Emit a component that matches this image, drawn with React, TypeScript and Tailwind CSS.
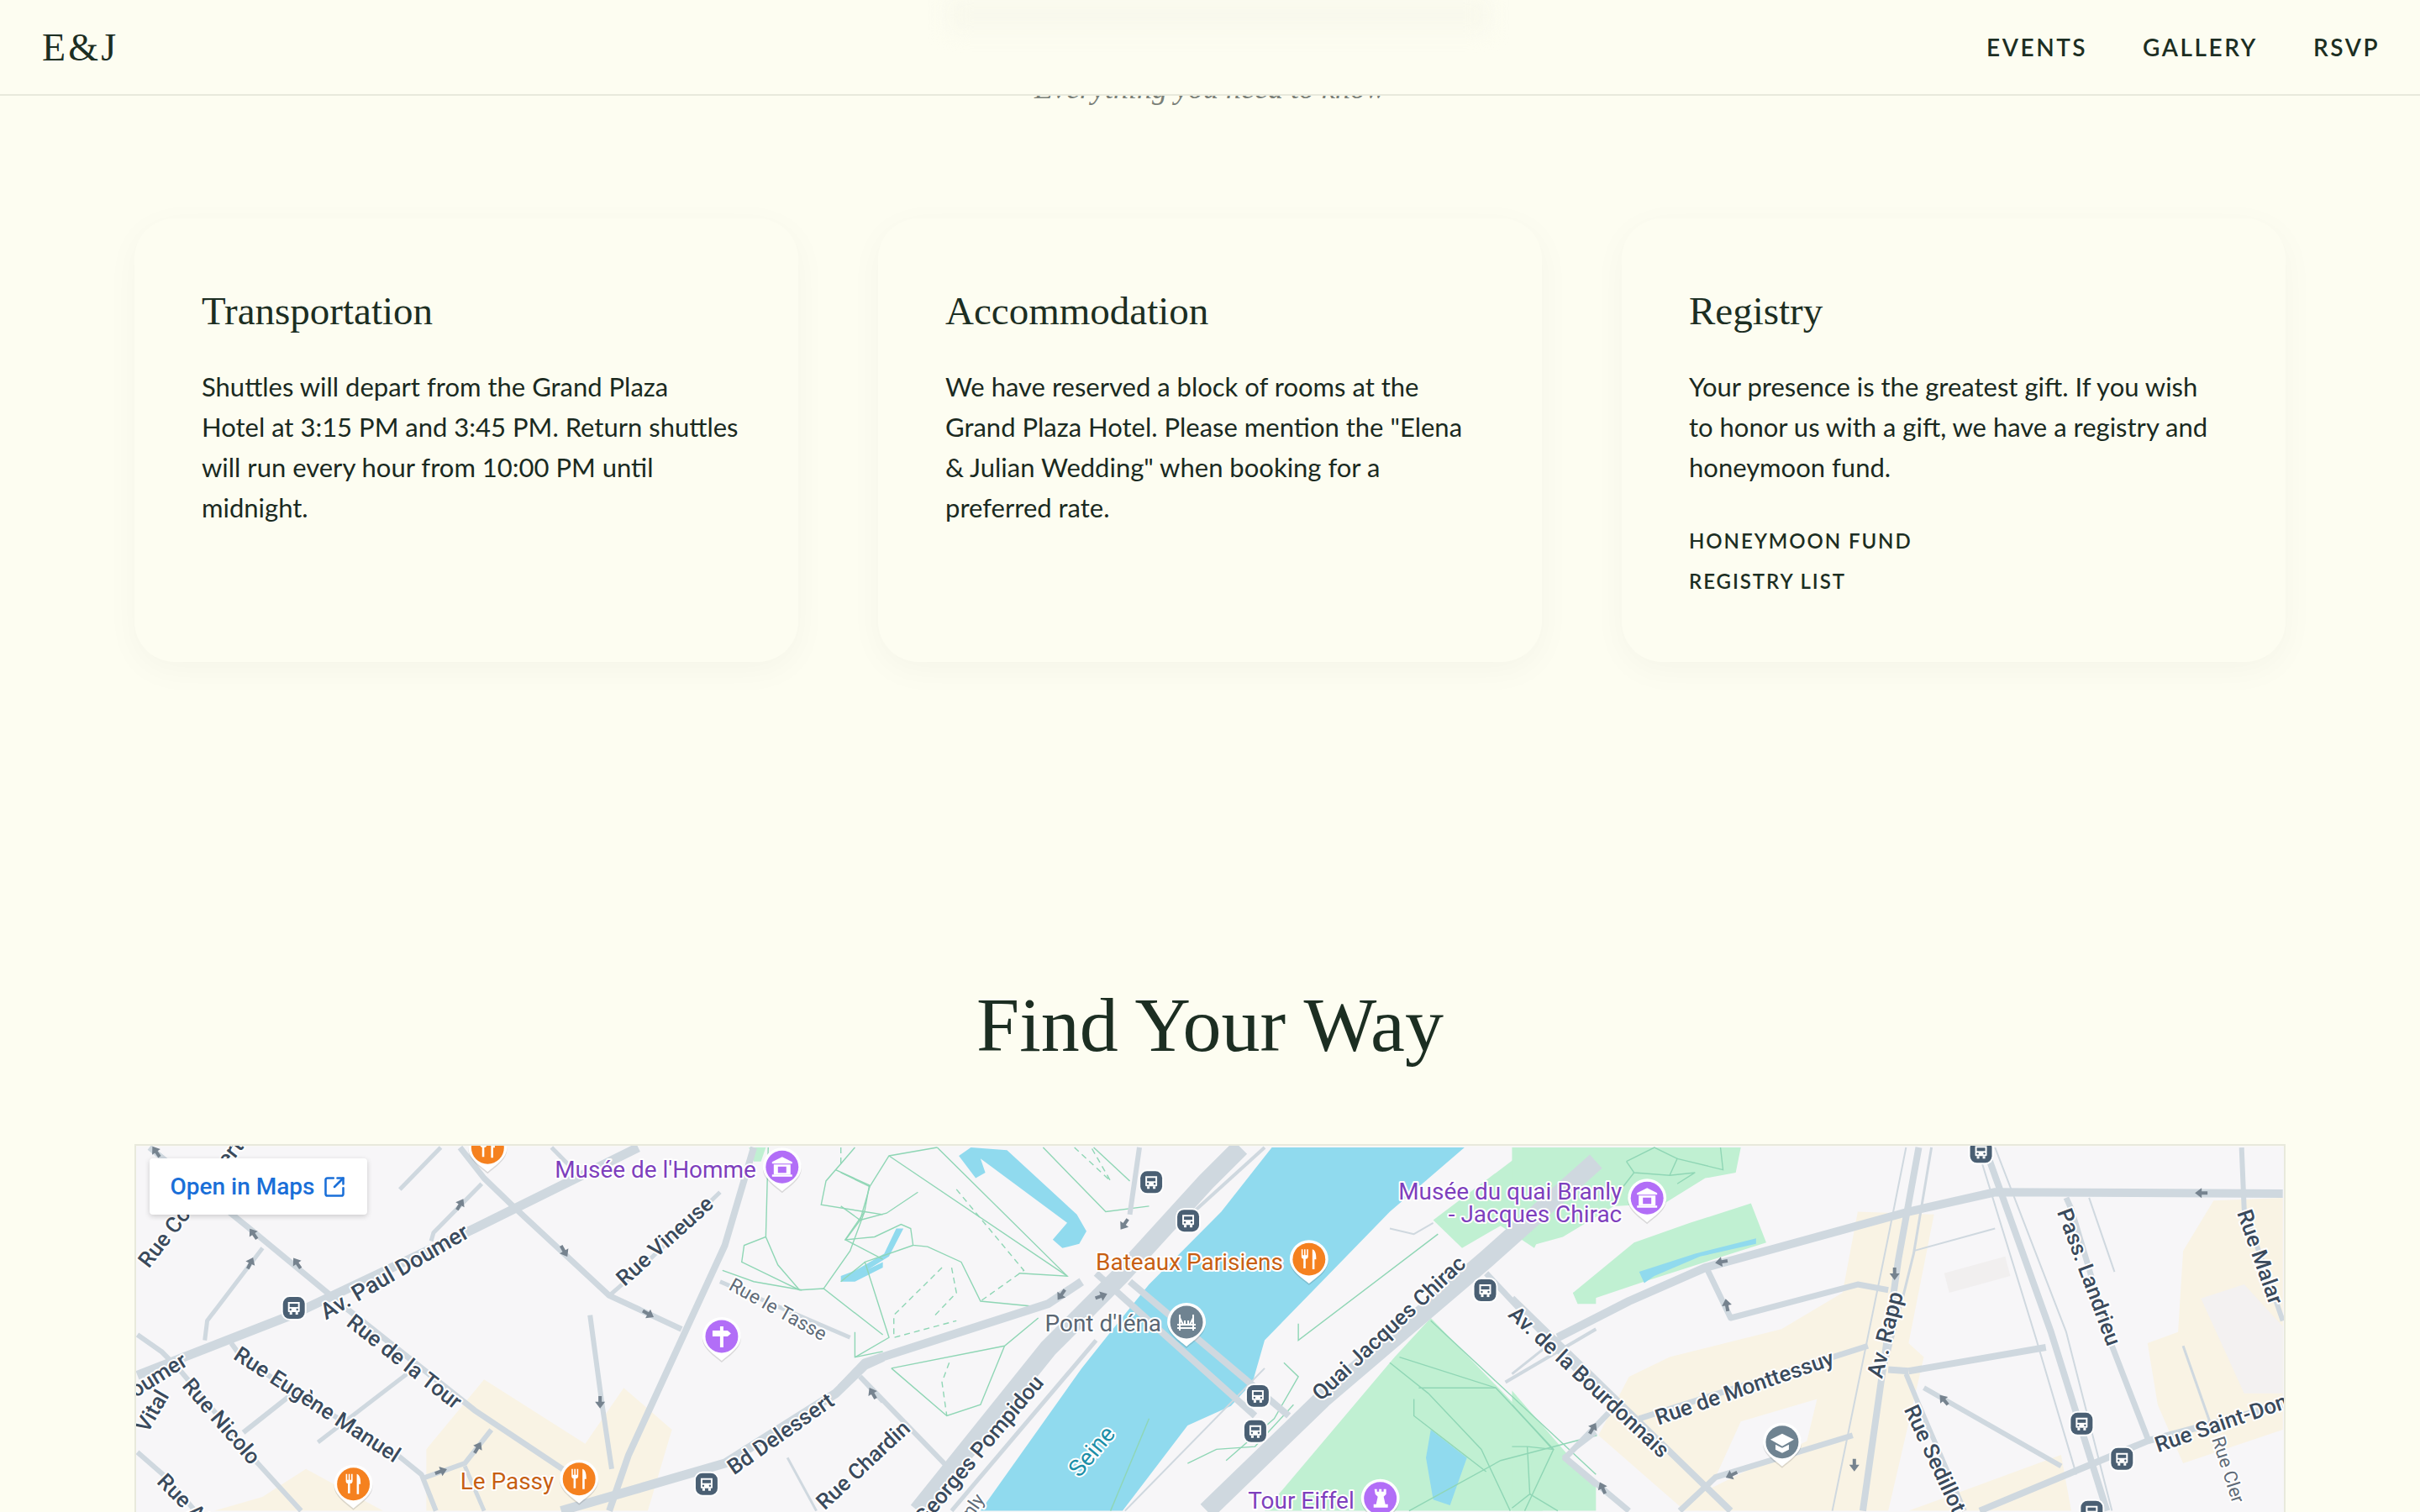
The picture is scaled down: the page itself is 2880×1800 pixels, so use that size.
import { SquareArrowOutUpRight } from "lucide-react";

// map data is written in the coordinates of three crops, each group scales them back to the page
const T3 = "translate(150 1340) scale(0.574 0.3333)";
const T4 = "translate(1000 1340) scale(0.574 0.3333)";
const T5 = "translate(1800 1340) scale(0.606 0.3333)";

const ROAD = "#cfd8df";
const GREEN = "#8fd6b5";
const BEIGE = "#f9f3e4";

type Line = [string, number];

const roads3: Line[] = [
  ["20,895 340,680 720,370 1060,80", 11],
  ["45,80 260,380 450,650 720,1020 920,1250", 7],
  ["690,80 740,190 800,290 1000,610 1150,730", 7],
  ["1000,610 1060,520 1230,240", 5],
  ["1000,1380 1040,1180 1240,430 1300,80", 8],
  ["960,680 985,1000 1005,1230", 6],
  ["160,770 165,700 280,440", 5],
  ["630,415 635,385 735,210", 5],
  ["565,230 650,80", 5],
  ["240,1100 350,950", 6],
  ["395,1135 580,890", 5],
  ["880,80 920,150", 5],
  ["215,780 240,840 560,1180 610,1250 640,1380", 6],
  ["20,750 70,810 110,880 270,1210 360,1380", 6],
  ["20,1170 80,1260 140,1380", 6],
  ["610,1265 700,1210 755,1090", 6],
  ["700,1220 740,1380", 5],
  ["900,1380 1240,1210 1470,960 1530,860 1568,830", 11],
  ["1230,560 1500,760", 5],
  ["1520,900 1568,990", 5],
  ["1370,1190 1430,1380", 3],
];

const roads4: Line[] = [
  ["160,1380 430,800 580,540 760,200 830,80", 22],
  ["230,1380 530,770", 5],
  ["620,80 600,320", 6],
  ["530,530 860,1040", 8],
  ["600,560 930,1040", 8],
  ["0,940 50,850 430,640 500,560", 10],
  ["40,900 220,1220", 6],
  ["760,1380 1000,980 1340,480 1568,130", 22],
  ["1340,530 1568,950", 7],
  ["1380,920 1568,730", 4],
  ["1500,1190 1568,1100", 5],
  ["1500,1190 1568,1290", 5],
  ["590,1380 880,870", 2],
  ["1140,370 1190,390 1230,350", 2],
  ["880,80 720,330", 4],
];

const roads5: Line[] = [
  ["90,760 230,630 380,510 780,310 950,240 1516,245", 10],
  ["0,890 90,760", 3],
  ["800,80 760,480 690,1380", 8],
  ["775,80 740,400 630,1380", 2],
  ["825,80 790,460 730,900", 3],
  ["930,80 1060,740 1170,1380", 8],
  ["915,80 1030,760 1110,1250", 2],
  ["950,80 1090,740 1180,1380", 2],
  ["1090,260 1100,300 1180,790 1250,1120", 7],
  ["1435,80 1440,300 1516,700", 6],
  ["385,520 430,690 680,570 740,590", 7],
  ["250,1050 700,790", 7],
  ["780,880 1050,795", 8],
  ["740,875 780,880", 8],
  ["190,1030 105,1190 230,1380", 7],
  ["0,620 430,1380", 8],
  ["775,890 800,1000 890,1380", 6],
  ["810,940 1080,1220", 6],
  ["920,1380 1250,1130 1516,1000", 8],
  ["330,1380 400,1260 670,1110", 7],
  ["790,450 950,370", 2],
  ["1320,790 1380,1100", 3],
  ["1135,260 1185,525", 2],
];

const paths3 = [
  "1510,80 1450,200 1440,285 1530,310 1568,320",
  "1470,160 1540,215 1530,310 1490,410 1568,480",
  "1330,80 1325,400 1280,430 1275,490 1395,590 1445,585 1568,750",
  "1325,400 1350,500 1395,590",
  "1530,310 1500,450 1445,585",
  "1235,520 1300,560 1400,590",
  "1510,740 1510,830 1568,810",
];
const paths4 = [
  "0,170 60,220 100,110 200,80",
  "60,220 40,340 0,290",
  "40,340 95,315 160,240",
  "100,110 470,540",
  "200,80 470,540 370,530",
  "420,80 550,310 640,290",
  "525,80 600,200",
  "40,340 10,410 70,400 125,355 145,370 150,430 180,435 250,490 290,630 410,650",
  "150,430 50,490 100,760 30,830",
  "50,490 0,560",
  "105,870 340,790 410,690",
  "105,870 220,1040 290,1000 340,790",
  "560,1380 640,1050",
  "950,710 950,770 1240,390",
  "1160,830 1360,940 1480,1160 1420,1380",
  "1225,700 1568,1250",
  "1140,850 1220,960 1330,1160 1390,1380",
  "1190,980 1190,1040 1340,1240",
  "1200,940 1360,940",
  "1570,1110 1370,1200 1180,1380",
  "720,1210 780,1160 860,1150 940,1000",
  "800,1200 900,1050 950,900 920,850",
];
const paths5 = [
  "225,130 280,80 325,120 310,180 240,170 225,130",
  "325,120 415,160 410,80",
  "310,180 360,170 325,210",
  "240,170 210,240",
  "0,1150 30,1150 80,1160 0,1000",
  "30,1150 35,1320 0,1370",
  "35,1320 90,1380",
];
const dashed4 = [
  "0,80 0,150",
  "485,80 560,200 520,80",
  "240,230 380,520 290,630",
  "210,510 110,680 110,760 240,700",
  "230,510 240,600 190,690",
  "225,850 210,920 220,1040",
];

function Lines({ data, color }: { data: Line[]; color: string }) {
  return (
    <>
      {data.map(([p, w], i) => (
        <polyline key={i} points={p} fill="none" stroke={color} strokeWidth={w} strokeLinejoin="round" vectorEffect="non-scaling-stroke" />
      ))}
    </>
  );
}

function Thin({ data, dash }: { data: string[]; dash?: boolean }) {
  return (
    <>
      {data.map((p, i) => (
        <polyline key={i} points={p} fill="none" stroke={GREEN} strokeWidth={1.4} strokeDasharray={dash ? "7 5" : undefined} vectorEffect="non-scaling-stroke" />
      ))}
    </>
  );
}

function Label({ t, x, y, r = 0, a = "middle", s = 26, c = "#3a4a5c", w = 500 }: { t: string; x: number; y: number; r?: number; a?: "start" | "middle" | "end"; s?: number; c?: string; w?: number }) {
  return (
    <text
      x={x}
      y={y}
      transform={r ? `rotate(${r} ${x} ${y})` : undefined}
      textAnchor={a}
      dominantBaseline="central"
      fontSize={s}
      fontWeight={w}
      fill={c}
      stroke="#fff"
      strokeWidth={4}
      strokeLinejoin="round"
      paintOrder="stroke"
    >
      {t}
    </text>
  );
}

function Bus({ x, y }: { x: number; y: number }) {
  return (
    <g transform={`translate(${x} ${y})`}>
      <rect x={-15} y={-15} width={30} height={30} rx={10} fill="#fff" />
      <rect x={-13} y={-13} width={26} height={26} rx={8} fill="#4a5f73" />
      <path d="M-7 -7h14v11a1 1 0 0 1-1 1h-12a1 1 0 0 1-1-1z" fill="#fff" />
      <rect x={-5} y={-5} width={10} height={4} fill="#4a5f73" />
      <rect x={-5} y={5} width={3} height={3} fill="#fff" />
      <rect x={2} y={5} width={3} height={3} fill="#fff" />
      <circle cx={-4} cy={2} r={1.2} fill="#4a5f73" />
      <circle cx={4} cy={2} r={1.2} fill="#4a5f73" />
    </g>
  );
}

const icons: Record<string, React.ReactNode> = {
  food: (
    <g fill="#fff">
      <path d="M-9 -12h1.6v7h1.6v-7h1.6v7h1.6v-7h1.6v9a3 3 0 0 1-3 2.6v11.4h-2.6v-11.4a3 3 0 0 1-2.4-2.6z" />
      <path d="M4 -12c3.5 1 4.6 5 4.6 12h-2v12h-2.6z" />
    </g>
  ),
  museum: (
    <g fill="#fff">
      <path d="M0 -12l12 6v2h-24v-2z" />
      <rect x={-10} y={-3} width={20} height={12} />
      <rect x={-12} y={9} width={24} height={2.5} />
      <rect x={-5} y={-0.5} width={10} height={7.5} fill="#b26ef7" />
    </g>
  ),
  sign: (
    <g fill="#fff">
      <rect x={-2} y={-12} width={4} height={25} />
      <path d="M-11 -7h18l4 3.5l-4 3.5h-18z" />
    </g>
  ),
  tower: (
    <g fill="#fff">
      <path d="M-7 -11h3v3h2.5v-3h3v3h2.5v-3h3v6l-3 3l2 9h3v4h-17v-4h3l2-9l-3-3z" />
    </g>
  ),
  bridge: (
    <g fill="none" stroke="#fff" strokeWidth={2}>
      <path d="M-11 3h22M-11 7h22M-8 -9v19M8 -9v19M-8 -5l4 8M8 -5l-4 8M-2 -2v5M2 -2v5" />
    </g>
  ),
  school: (
    <g>
      <path d="M0 -10l14 7l-14 8l-14 -8z" fill="#fff" />
      <path d="M-8 3v6l8 4l8-4v-6l-8 4z" fill="#fff" />
    </g>
  ),
};

function Pin({ x, y, color, icon }: { x: number; y: number; color: string; icon: string }) {
  return (
    <g transform={`translate(${x} ${y})`}>
      <path d="M-23 0a23 23 0 0 1 46 0c0 12-12 20-23 29c-11-9-23-17-23-29z" fill="#000" opacity={0.12} transform="translate(0 2)" />
      <path d="M-23 0a23 23 0 0 1 46 0c0 12-12 20-23 29c-11-9-23-17-23-29z" fill="#fff" />
      <circle r={19.5} fill={color} />
      {icons[icon]}
    </g>
  );
}

function Arrow({ x, y, r }: { x: number; y: number; r: number }) {
  return <path transform={`translate(${x} ${y}) rotate(${r})`} d="M0 -8l6 8h-4v7h-4v-7h-4z" fill="#76838f" />;
}

function ParisMap() {
  return (
    <svg viewBox="160 1365 2560 440" className="block w-full h-[440px] font-['Roboto',sans-serif]">
      <rect x={160} y={1365} width={2560} height={440} fill="#f7f6f8" />

      {/* land use */}
      <g transform={T3} fill={BEIGE}>
        <polygon points="620,1160 740,910 950,1140 1030,940 1130,1090 1080,1380 620,1380" />
        <polygon points="180,1380 280,1330 370,1230 530,1380" />
        <polygon points="1290,80 1325,80 1315,130 1300,130" fill="#c0f0d2" />
      </g>
      <g transform={T4}>
        <polygon points="880,1380 1150,830 1225,690 1500,1180 1568,1290 1568,1380" fill="#c0f0d2" />
        <polygon points="1230,340 1430,80 1568,80 1568,200 1490,260 1440,440 1370,360 1290,440" fill="#c0f0d2" />
        <polygon points="1520,600 1568,570 1568,640 1530,640" fill="#c0f0d2" />
      </g>
      <g transform={T5}>
        <polygon points="0,80 450,80 440,170 380,190 300,280 200,290 100,400 40,430 60,340 0,350" fill="#c0f0d2" />
        <polygon points="120,600 240,420 350,350 470,280 500,420 260,560 130,640" fill="#c0f0d2" />
        <polygon points="0,950 110,1180 60,1380 0,1380" fill="#c0f0d2" />
        <polygon points="170,1110 230,900 310,830 530,730 650,600 680,310 830,320 780,780 810,830 740,1380 340,1380" fill={BEIGE} />
        <polygon points="1250,780 1310,740 1320,450 1380,270 1516,260 1516,1090 1320,1210 1270,1000" fill={BEIGE} />
        <polygon points="780,1380 1080,1180 1100,1380" fill={BEIGE} />
        <polygon points="850,530 970,470 980,540 860,600" fill="#f1efef" />
        <polygon points="1355,620 1440,570 1516,720 1516,960 1440,960 1400,800" fill="#f3f1f1" />
        <polygon points="390,1300 450,1060 600,980 580,1130" fill="#f7f6f8" />
        <polygon points="250,525 360,460 480,405 480,425 370,470 280,540 260,565" fill="#90daee" />
      </g>

      {/* water */}
      <g transform={T4} fill="#90daee">
        <polygon points="895,80 1295,80 1140,310 880,770 855,920 810,1005 720,1075 585,1380 290,1380 500,870 560,740 640,570 790,310" />
        <polygon points="270,80 345,90 490,320 510,380 495,425 460,440 440,410 470,350 290,120 300,170 280,190 245,110" />
        <polygon points="0,560 30,545 100,470 130,370 115,370 90,460 30,520 0,540" />
        <polygon points="1225,1090 1300,1190 1265,1360 1230,1340 1215,1190" />
      </g>
      <g transform={T3} fill="#90daee">
        <polygon points="1480,560 1510,560 1568,510 1568,490 1520,530" />
      </g>

      {/* park paths */}
      <g transform={T3}><Thin data={paths3} /></g>
      <g transform={T4}>
        <Thin data={paths4} />
        <Thin data={dashed4} dash />
      </g>
      <g transform={T5}><Thin data={paths5} /></g>

      {/* streets */}
      <g transform={T3}><Lines data={roads3} color={ROAD} /></g>
      <g transform={T4}><Lines data={roads4} color={ROAD} /></g>
      <g transform={T5}><Lines data={roads5} color={ROAD} /></g>

      {/* one way arrows */}
      <Arrow x={184} y={1372} r={-35} />
      <Arrow x={300} y={1470} r={-35} />
      <Arrow x={352} y={1505} r={-35} />
      <Arrow x={296} y={1505} r={25} />
      <Arrow x={546} y={1435} r={30} />
      <Arrow x={670} y={1490} r={150} />
      <Arrow x={770} y={1565} r={120} />
      <Arrow x={713} y={1670} r={180} />
      <Arrow x={567} y={1725} r={30} />
      <Arrow x={523} y={1753} r={70} />
      <Arrow x={1338} y={1458} r={215} />
      <Arrow x={1263} y={1542} r={215} />
      <Arrow x={1310} y={1544} r={70} />
      <Arrow x={1038} y={1660} r={-30} />
      <Arrow x={2050} y={1503} r={260} />
      <Arrow x={2056} y={1555} r={-10} />
      <Arrow x={2256} y={1517} r={180} />
      <Arrow x={2622} y={1421} r={270} />
      <Arrow x={2315} y={1668} r={-40} />
      <Arrow x={2208} y={1745} r={180} />
      <Arrow x={2062} y={1757} r={245} />
      <Arrow x={1896} y={1702} r={30} />
      <Arrow x={1908} y={1773} r={-25} />

      {/* street names */}
      <Label t="Av. Paul Doumer" x={468} y={1515} r={-30} s={27} />
      <Label t="Rue Vineuse" x={790} y={1478} r={-42} />
      <Label t="Rue le Tasse" x={925} y={1560} r={29} s={23} w={400} c="#5f6b78" />
      <Label t="Rue de la Tour" x={480} y={1622} r={38} />
      <Label t="Rue Eugène Manuel" x={376} y={1673} r={33} />
      <Label t="Rue Nicolo" x={262} y={1693} r={49} />
      <Label t="Doumer" x={218} y={1618} r={-32} a="end" />
      <Label t="Vital" x={192} y={1658} r={-60} a="end" />
      <Label t="Rue Cortambert" x={168} y={1506} r={-52} a="start" />
      <Label t="Rue Albert" x={190} y={1760} r={45} a="start" />
      <Label t="Bd Delessert" x={928} y={1708} r={-35} />
      <Label t="Rue Chardin" x={1078} y={1697} r={-43} a="end" />
      <Label t="Av. Georges Pompidou" x={1236} y={1642} r={-50} a="end" />
      <Label t="Branly" x={1166} y={1782} r={-55} a="end" s={22} w={400} c="#5f6b78" />
      <Label t="Seine" x={1299} y={1729} r={-50} s={28} w={400} c="#1c8fa8" />
      <Label t="Quai Jacques Chirac" x={1653} y={1582} r={-43} />
      <Label t="Av. de la Bourdonnais" x={1892} y={1646} r={43} />
      <Label t="Rue de Monttessuy" x={2077} y={1653} r={-19} />
      <Label t="Av. Rapp" x={2245} y={1590} r={-76} s={27} />
      <Label t="Pass. Landrieu" x={2488} y={1521} r={69.5} />
      <Label t="Rue Malar" x={2692} y={1497} r={70.6} />
      <Label t="Rue Sedillot" x={2275} y={1675} r={65} a="start" />
      <Label t="Rue Saint-Dominique" x={2567} y={1722} r={-19} a="start" />
      <Label t="Rue Cler" x={2641} y={1712} r={72} a="start" s={22} w={400} c="#5f6b78" />

      {/* transit */}
      <Bus x={348} y={1558} />
      <Bus x={840} y={1768} />
      <Bus x={1370} y={1408} />
      <Bus x={1414} y={1454} />
      <Bus x={1497} y={1663} />
      <Bus x={1494} y={1705} />
      <Bus x={1768} y={1537} />
      <Bus x={2359} y={1372} />
      <Bus x={2479} y={1696} />
      <Bus x={2527} y={1738} />
      <Bus x={2491} y={1801} />

      {/* places */}
      <Pin x={579} y={1367} color="#f5811f" icon="food" />
      <Pin x={930} y={1390} color="#b26ef7" icon="museum" />
      <Pin x={858} y={1592} color="#b26ef7" icon="sign" />
      <Pin x={419} y={1768} color="#f5811f" icon="food" />
      <Pin x={688} y={1762} color="#f5811f" icon="food" />
      <Pin x={1558} y={1500} color="#f5811f" icon="food" />
      <Pin x={1412} y={1575} color="#6f8391" icon="bridge" />
      <Pin x={1643} y={1785} color="#b26ef7" icon="tower" />
      <Pin x={1961} y={1427} color="#b26ef7" icon="museum" />
      <Pin x={2122} y={1718} color="#6f8391" icon="school" />

      <Label t="Musée de l'Homme" x={899} y={1393} a="end" s={28} w={400} c="#7e3fbd" />
      <Label t="Le Passy" x={658} y={1765} a="end" s={28} w={400} c="#c75f12" />
      <Label t="Bateaux Parisiens" x={1527} y={1503} a="end" s={28} w={400} c="#c75f12" />
      <Label t="Pont d'Iéna" x={1382} y={1576} a="end" s={28} w={400} c="#5a6672" />
      <Label t="Tour Eiffel" x={1612} y={1788} a="end" s={28} w={400} c="#7e3fbd" />
      <Label t="Musée du quai Branly" x={1931} y={1419} a="end" s={28} w={400} c="#7e3fbd" />
      <Label t="- Jacques Chirac" x={1931} y={1446} a="end" s={28} w={400} c="#7e3fbd" />
    </svg>
  );
}

function InfoCard({ title, lines, links }: { title: string; lines: string[]; links?: string[] }) {
  return (
    <div className="h-[528px] rounded-[48px] bg-[#fdfdf1] px-[80px] pt-[82px] shadow-[0_10px_40px_rgba(30,40,20,0.035)]">
      <h3 className="font-['Liberation_Serif',serif] text-[47px] leading-[56px] text-[#1c2e22] mb-[38px]">{title}</h3>
      <p className="text-[31px] leading-[48px] whitespace-nowrap text-[#1a2a1f]">
        {lines.map((l) => (
          <span key={l} className="block">{l}</span>
        ))}
      </p>
      {links && (
        <div className="mt-[40px] flex flex-col">
          {links.map((l) => (
            <a key={l} className="text-[24px] leading-[48px] font-semibold tracking-[0.08em] text-[#1c2e22]">
              {l}
            </a>
          ))}
        </div>
      )}
    </div>
  );
}

function App() {
  return (
    <div className="relative h-[1800px] overflow-hidden bg-[#fdfdf1] font-['Lato',sans-serif]">
      <header className="absolute inset-x-0 top-0 z-10 flex h-[114px] items-center justify-between border-b-2 border-[#e8e9dc] bg-[#fdfdf1] pl-[50px] pr-[48px]">
        <div className="absolute left-[1130px] top-0 h-[36px] w-[640px] bg-[#f8f8ec] blur-md" />
        <span className="font-['Liberation_Serif',serif] text-[46px] tracking-[0.07em] text-[#1c2e22]">E&amp;J</span>
        <nav className="flex gap-[66px] text-[28px] font-semibold tracking-[0.09em] text-[#1c2e22]">
          <a>EVENTS</a>
          <a>GALLERY</a>
          <a>RSVP</a>
        </nav>
      </header>

      <main className="pt-[81px]">
        <p className="mb-[131px] text-center font-['Liberation_Serif',serif] text-[36px] leading-[48px] italic text-[#7a8078]">
          Everything you need to know
        </p>
        <section className="grid grid-cols-3 gap-[95px] px-[160px]">
          <InfoCard
            title="Transportation"
            lines={["Shuttles will depart from the Grand Plaza", "Hotel at 3:15 PM and 3:45 PM. Return shuttles", "will run every hour from 10:00 PM until", "midnight."]}
          />
          <InfoCard
            title="Accommodation"
            lines={["We have reserved a block of rooms at the", "Grand Plaza Hotel. Please mention the \"Elena", "& Julian Wedding\" when booking for a", "preferred rate."]}
          />
          <InfoCard
            title="Registry"
            lines={["Your presence is the greatest gift. If you wish", "to honor us with a gift, we have a registry and", "honeymoon fund."]}
            links={["HONEYMOON FUND", "REGISTRY LIST"]}
          />
        </section>

        <h2 className="mt-[378px] mb-[88px] text-center font-['Liberation_Serif',serif] text-[92px] leading-[108px] text-[#1c2e22]">
          Find Your Way
        </h2>

        <div className="relative mx-[160px] border-2 border-[#e8e9dc]">
          <ParisMap />
          <a className="absolute left-[16px] top-[15px] flex h-[67px] w-[259px] items-center justify-center gap-[10px] rounded-[4px] bg-white font-['Roboto',sans-serif] text-[28px] font-medium text-[#1a6fd8] shadow-[0_2px_6px_rgba(0,0,0,0.18)]">
            Open in Maps
            <SquareArrowOutUpRight size={28} strokeWidth={2.2} />
          </a>
        </div>
      </main>
    </div>
  );
}

export default App;
